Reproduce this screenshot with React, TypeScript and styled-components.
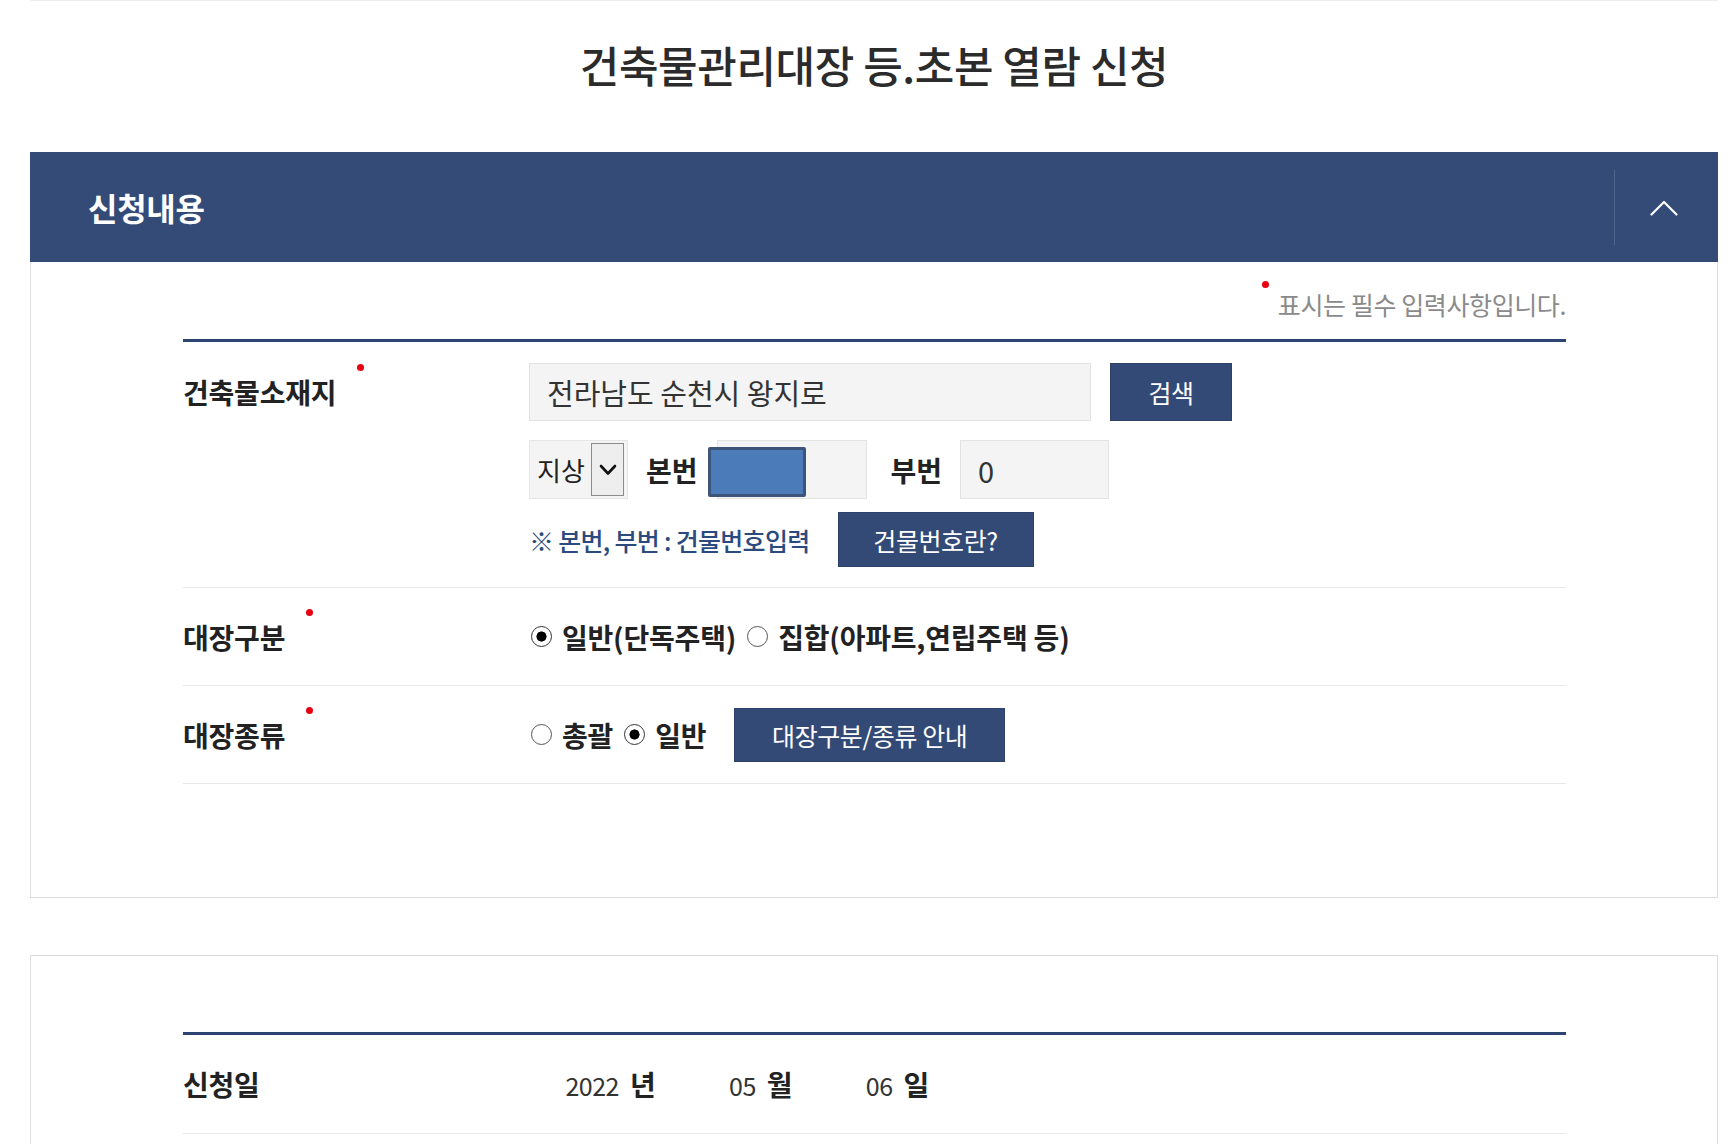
import styled, { createGlobalStyle } from "styled-components";

const GlobalStyle = createGlobalStyle`
  html, body {
    margin: 0;
    padding: 0;
    background: #fff;
    overflow: hidden;
  }
  body {
    font-family: "Noto Sans CJK KR", "Noto Sans", sans-serif;
    color: #222;
  }
  * {
    box-sizing: border-box;
  }
`;

const Page = styled.div`
  width: 1688px;
  margin-left: 30px;
  border-top: 1px solid #ededed;
`;

const PageTitle = styled.h2`
  margin: 0 0 64px;
  padding-top: 39px;
  font-size: 43px;
  line-height: 48px;
  font-weight: 500;
  letter-spacing: -0.4px;
  color: #2b2b2b;
  text-align: center;
`;

const Panel = styled.section<{ $boxed?: boolean }>`
  border: ${(p) => (p.$boxed ? "1px solid #dcdcdc" : "none")};
  margin-top: ${(p) => (p.$boxed ? "57px" : "0")};
  padding: ${(p) => (p.$boxed ? "76px 151px 10px 152px" : "0")};
`;

const PanelHeader = styled.div`
  display: flex;
  align-items: center;
  justify-content: space-between;
  height: 110px;
  background: #344b78;
  padding-left: 58px;
`;

const PanelTitle = styled.h3`
  margin: 0;
  font-size: 32px;
  font-weight: 700;
  letter-spacing: -0.3px;
  color: #fff;
  line-height: 36px;
`;

const ToggleButton = styled.button`
  display: flex;
  align-items: center;
  justify-content: center;
  width: 104px;
  height: 75px;
  padding: 0 6px 0 0;
  background: transparent;
  border: none;
  border-left: 1px solid rgba(255, 255, 255, 0.14);
  cursor: pointer;
`;

const PanelBody = styled.div`
  border: 1px solid #dcdcdc;
  border-top: none;
  padding: 27px 151px 113px 152px;
`;

const RequiredNote = styled.p`
  margin: 0 0 20px;
  text-align: right;
  font-size: 25px;
  line-height: 30px;
  letter-spacing: -0.4px;
  color: #8a8a8a;
`;

const NoteText = styled.span`
  position: relative;
  &::before {
    content: "";
    position: absolute;
    left: -16px;
    top: -5px;
    width: 7px;
    height: 7px;
    border-radius: 50%;
    background: #e60012;
  }
`;

const FormTable = styled.div`
  border-top: 3px solid #2d4372;
`;

const FormRow = styled.div<{ $top?: boolean; $height?: number }>`
  display: grid;
  grid-template-columns: 346px 1fr;
  align-items: ${(p) => (p.$top ? "start" : "center")};
  min-height: ${(p) => p.$height ?? 98}px;
  padding: ${(p) => (p.$top ? "21px 0 20px" : "0")};
  border-bottom: 1px solid #e8e8e8;
`;

const FieldLabel = styled.span<{ $required?: boolean; $offset?: number }>`
  position: relative;
  justify-self: start;
  margin-top: ${(p) => p.$offset ?? 0}px;
  font-size: 28px;
  line-height: 32px;
  font-weight: 700;
  letter-spacing: -0.2px;
  color: #222;
  &::after {
    content: "";
    display: ${(p) => (p.$required ? "block" : "none")};
    position: absolute;
    left: calc(100% + 21px);
    top: -12px;
    width: 7px;
    height: 7px;
    border-radius: 50%;
    background: #e60012;
  }
`;

const FieldStack = styled.div`
  display: flex;
  flex-direction: column;
`;

const FieldLine = styled.div<{ $mt?: number }>`
  display: flex;
  align-items: center;
  margin-top: ${(p) => p.$mt ?? 0}px;
`;

const TextBox = styled.input<{ $w: number; $h?: number }>`
  width: ${(p) => p.$w}px;
  height: ${(p) => p.$h ?? 58}px;
  padding: 0 0 0 17px;
  background: #f4f4f4;
  border: 1px solid #e3e3e3;
  font-family: inherit;
  font-size: 29px;
  color: #333;
  outline: none;
`;

const MaskedField = styled.div`
  position: relative;
`;

const MaskBlock = styled.div`
  position: absolute;
  left: -9px;
  top: 7px;
  width: 98px;
  height: 50px;
  background: #4b7cb9;
  border: 3px solid #3c5578;
  border-radius: 2px;
`;

const NavyButton = styled.button<{ $w: number; $h: number; $ml?: number }>`
  width: ${(p) => p.$w}px;
  height: ${(p) => p.$h}px;
  margin-left: ${(p) => p.$ml ?? 0}px;
  background: #344a76;
  border: 1px solid #2e416a;
  color: #fff;
  font-family: inherit;
  font-size: 25px;
  letter-spacing: -0.4px;
  cursor: pointer;
`;

const SelectBox = styled.div`
  display: flex;
  align-items: stretch;
  justify-content: space-between;
  width: 99px;
  height: 59px;
  padding: 2px 3px 2px 7px;
  background: #f4f4f4;
  border: 1px solid #e6e6e6;
`;

const SelectValue = styled.span`
  align-self: center;
  font-size: 26px;
  color: #222;
`;

const SelectArrow = styled.span`
  display: flex;
  align-items: center;
  justify-content: center;
  width: 33px;
  background: #eeeeee;
  border: 1px solid #8c8c8c;
`;

const InlineLabel = styled.span<{ $ml: number; $mr: number }>`
  margin: 0 ${(p) => p.$mr}px 0 ${(p) => p.$ml}px;
  font-size: 28px;
  font-weight: 700;
  color: #222;
`;

const HintText = styled.span`
  font-size: 25px;
  font-weight: 500;
  letter-spacing: -0.7px;
  color: #2b4a7e;
`;

const Options = styled.div`
  display: flex;
  align-items: center;
  gap: 11px;
  padding-left: 2px;
`;

const Option = styled.label`
  display: flex;
  align-items: center;
  gap: 10px;
  font-size: 28px;
  font-weight: 700;
  letter-spacing: -0.2px;
  color: #222;
  cursor: pointer;
`;

const Radio = styled.input`
  appearance: none;
  width: 21px;
  height: 21px;
  margin: 0;
  border: 1.5px solid #555;
  border-radius: 50%;
  background: #fff;
  &:checked {
    background: radial-gradient(circle, #000 0 4.8px, #fff 5.3px);
    border-color: #333;
  }
`;

const DateLine = styled.div`
  display: flex;
  align-items: baseline;
  gap: 10px;
`;

const DatePart = styled.span`
  display: flex;
  align-items: baseline;
  gap: 11px;
`;

const DateNumber = styled.span`
  width: 90px;
  text-align: right;
  font-size: 25px;
  letter-spacing: -0.5px;
  color: #333;
`;

const DateUnit = styled.span`
  font-size: 28px;
  font-weight: 700;
  color: #222;
`;

const ChevronUp = () => (
  <svg width="28" height="17" viewBox="0 0 28 17" fill="none">
    <polyline
      points="1.5,15.5 14,3 26.5,15.5"
      stroke="#fff"
      strokeWidth="2.2"
      strokeLinecap="round"
      strokeLinejoin="round"
    />
  </svg>
);

const ChevronDown = () => (
  <svg width="18" height="12" viewBox="0 0 18 12" fill="none">
    <polyline
      points="2,2 9,9.5 16,2"
      stroke="#111"
      strokeWidth="2.6"
      strokeLinecap="round"
      strokeLinejoin="round"
    />
  </svg>
);

const dateParts = [
  { value: "2022", unit: "년" },
  { value: "05", unit: "월" },
  { value: "06", unit: "일" },
];

const App = () => {
  return (
    <>
      <GlobalStyle />
      <Page>
        <PageTitle>건축물관리대장 등.초본 열람 신청</PageTitle>

        <Panel>
          <PanelHeader>
            <PanelTitle>신청내용</PanelTitle>
            <ToggleButton aria-label="접기">
              <ChevronUp />
            </ToggleButton>
          </PanelHeader>
          <PanelBody>
            <RequiredNote>
              <NoteText>표시는 필수 입력사항입니다.</NoteText>
            </RequiredNote>
            <FormTable>
              {/* 건축물 소재지 */}
              <FormRow $top $height={245}>
                <FieldLabel $required $offset={13}>
                  건축물소재지
                </FieldLabel>
                <FieldStack>
                  <FieldLine>
                    <TextBox $w={562} readOnly value="전라남도 순천시 왕지로" />
                    <NavyButton $w={122} $h={58} $ml={19}>
                      검색
                    </NavyButton>
                  </FieldLine>
                  <FieldLine $mt={19}>
                    <SelectBox>
                      <SelectValue>지상</SelectValue>
                      <SelectArrow>
                        <ChevronDown />
                      </SelectArrow>
                    </SelectBox>
                    <InlineLabel $ml={18} $mr={19}>
                      본번
                    </InlineLabel>
                    <MaskedField>
                      <TextBox $w={150} $h={59} readOnly value="" />
                      <MaskBlock />
                    </MaskedField>
                    <InlineLabel $ml={24} $mr={18}>
                      부번
                    </InlineLabel>
                    <TextBox $w={149} $h={59} readOnly value="0" />
                  </FieldLine>
                  <FieldLine $mt={13}>
                    <HintText>※ 본번, 부번 : 건물번호입력</HintText>
                    <NavyButton $w={196} $h={55} $ml={28}>
                      건물번호란?
                    </NavyButton>
                  </FieldLine>
                </FieldStack>
              </FormRow>

              {/* 대장구분 */}
              <FormRow>
                <FieldLabel $required>대장구분</FieldLabel>
                <Options>
                  <Option>
                    <Radio type="radio" name="kind" defaultChecked />
                    일반(단독주택)
                  </Option>
                  <Option>
                    <Radio type="radio" name="kind" />
                    집합(아파트,연립주택 등)
                  </Option>
                </Options>
              </FormRow>

              {/* 대장종류 */}
              <FormRow>
                <FieldLabel $required>대장종류</FieldLabel>
                <Options>
                  <Option>
                    <Radio type="radio" name="type" />
                    총괄
                  </Option>
                  <Option>
                    <Radio type="radio" name="type" defaultChecked />
                    일반
                  </Option>
                  <NavyButton $w={271} $h={54} $ml={17}>
                    대장구분/종류 안내
                  </NavyButton>
                </Options>
              </FormRow>
            </FormTable>
          </PanelBody>
        </Panel>

        <Panel $boxed>
          <FormTable>
            <FormRow $height={99}>
              <FieldLabel>신청일</FieldLabel>
              <DateLine>
                {dateParts.map((part) => (
                  <DatePart key={part.unit}>
                    <DateNumber>{part.value}</DateNumber>
                    <DateUnit>{part.unit}</DateUnit>
                  </DatePart>
                ))}
              </DateLine>
            </FormRow>
          </FormTable>
        </Panel>
      </Page>
    </>
  );
};

export default App;
